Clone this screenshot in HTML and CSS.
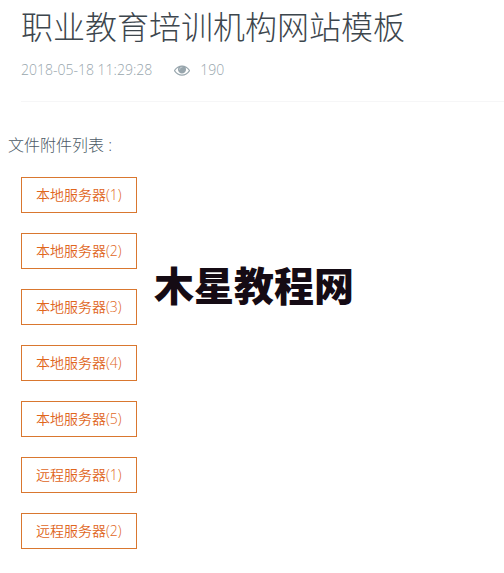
FILE: index.html
```html
<!DOCTYPE html>
<html lang="zh-CN">
<head>
<meta charset="UTF-8">
<meta name="viewport" content="width=device-width, initial-scale=1">
<title>职业教育培训机构网站模板</title>
<link rel="stylesheet" href="styles.css">
</head>
<body>
<div class="header">
	<h1>职业教育培训机构网站模板</h1>
	<div class="meta">
		<span>2018-05-18 11:29:28</span>
		<span class="views">
			<svg class="eye" viewBox="0 0 1792 1792" aria-hidden="true"><path d="M1664 960q-152-236-381-353 61 104 61 225 0 185-131.500 316.500t-316.500 131.500-316.500-131.500-131.500-316.500q0-121 61-225-229 117-381 353 133 205 333.500 326.500t434.500 121.500 434.500-121.500 333.500-326.500zm-720-384q0-20-14-34t-34-14q-125 0-214.500 89.500t-89.500 214.500q0 20 14 34t34 14 34-14 14-34q0-86 61-147t147-61q20 0 34-14t14-34zm848 384q0 34-20 69-140 230-376.500 368.500t-499.500 138.500-499.500-139-376.500-368q-20-35-20-69t20-69q140-229 376.500-368t499.500-139 499.500 139 376.500 368q20 35 20 69z"/><circle cx="896" cy="832" r="400" fill-opacity="0.5"/></svg>
			190
		</span>
	</div>
</div>

<div class="files">
	<h2>文件附件列表 :</h2>
	<ul>
		<li><a class="btn" href="#local1">本地服务器(1)</a></li>
		<li><a class="btn" href="#local2">本地服务器(2)</a></li>
		<li><a class="btn" href="#local3">本地服务器(3)</a></li>
		<li><a class="btn" href="#local4">本地服务器(4)</a></li>
		<li><a class="btn" href="#local5">本地服务器(5)</a></li>
		<li><a class="btn" href="#remote1">远程服务器(1)</a></li>
		<li><a class="btn" href="#remote2">远程服务器(2)</a></li>
	</ul>
</div>

<div class="watermark">木星教程网</div>
</body>
</html>
```
FILE: styles.css
```css
body {
	position: relative;
	margin: 0;
	background-color: #fff;
	color: #4c5a66;
	font-family: "Open Sans", "Noto Sans CJK SC", sans-serif;
	font-weight: 300;
}

.header {
	margin-left: 21px;
	padding: 4px 0 21px;
	border-bottom: 1px solid #f6f6f7;
}

h1 {
	margin: 0;
	color: #3d464d;
	font-size: 32px;
	font-weight: 300;
	line-height: 46px;
}

.meta {
	display: flex;
	gap: 22px;
	margin-top: 10px;
	color: #98a6ad;
	font-size: 14px;
	line-height: 20px;
}

.views {
	display: flex;
	align-items: center;
	gap: 10px;
}

.eye {
	width: 16px;
	height: 16px;
	fill: #98a6ad;
}

.files {
	padding: 31px 8px 24px;
}

h2 {
	margin: 0;
	font-size: 16px;
	font-weight: 300;
	line-height: 24px;
}

ul {
	display: flex;
	flex-direction: column;
	align-items: flex-start;
	gap: 20px;
	margin: 20px 0 0 13px;
	padding: 0;
	list-style: none;
}

.btn {
	display: block;
	padding: 7px 14px;
	border: 1px solid #d9772f;
	color: #e0661c;
	font-size: 14px;
	font-weight: 350;
	line-height: 20px;
	text-decoration: none;
}

.watermark {
	position: absolute;
	top: 254px;
	left: 0;
	width: 100%;
	padding-left: 4px;
	box-sizing: border-box;
	color: #150b14;
	font-family: "Noto Sans CJK SC", sans-serif;
	font-size: 40px;
	font-weight: 900;
	line-height: 60px;
	text-align: center;
	pointer-events: none;
}
```
